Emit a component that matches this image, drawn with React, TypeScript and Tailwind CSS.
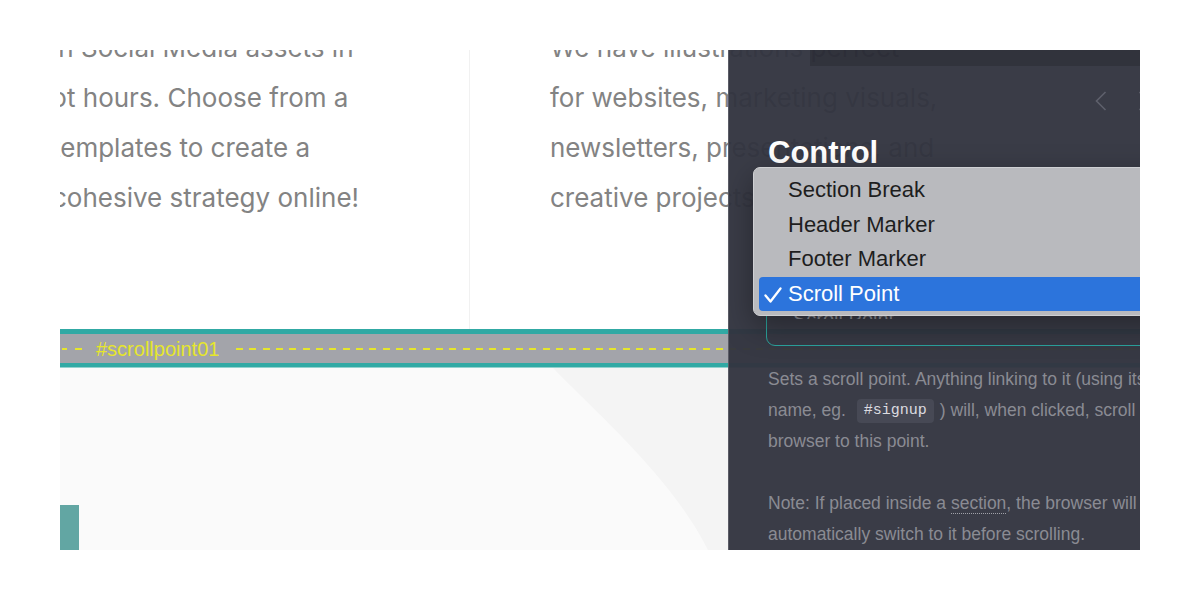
import React from "react";

function Chevron({ dir }: { dir: "left" | "right" }) {
  return (
    <svg width="12" height="20" viewBox="0 0 12 20" fill="none">
      {dir === "left" ? (
        <path d="M10.5 1 L1.5 10 L10.5 19" stroke="#5e606c" strokeWidth="1.6" />
      ) : (
        <path d="M1.5 1 L10.5 10 L1.5 19" stroke="#5e606c" strokeWidth="1.6" />
      )}
    </svg>
  );
}

function Check() {
  return (
    <svg width="18" height="16" viewBox="0 0 18 16" fill="none">
      <path d="M1.5 8.5 L6.5 14.5 L16.5 1.5" stroke="white" strokeWidth="2.3" strokeLinecap="round" strokeLinejoin="round" />
    </svg>
  );
}

export default function App() {
  const items = ["Section Break", "Header Marker", "Footer Marker"];
  return (
    <div className="w-[1200px] h-[600px] bg-white pt-[50px] pl-[60px] font-['Inter',sans-serif]">
      <div className="relative w-[1080px] h-[500px] overflow-hidden bg-white flex flex-col">
        {/* website columns */}
        <div className="flex h-[279px] shrink-0 text-[26px] leading-[50px] text-[#838383] whitespace-nowrap">
          <div className="w-[410px] shrink-0 border-r border-[#f1f1f1]">
            <div className="-mt-[27px] -ml-[8px]">
              <div>in Social Media assets in</div>
              <div className="-ml-[16px]">not hours. Choose from a</div>
              <div>templates to create a</div>
              <div>cohesive strategy online!</div>
            </div>
          </div>
          <div className="pl-[80px]">
            <div className="-mt-[27px]">
              <div>We have illustrations perfect</div>
              <div>for websites, marketing visuals,</div>
              <div>newsletters, presentations, and</div>
              <div>creative projects.</div>
            </div>
          </div>
        </div>

        {/* lower section */}
        <div className="relative flex-1 bg-[#fafafa]">
          <svg className="absolute inset-0" width="1080" height="221" viewBox="0 0 1080 221">
            <path d="M455 0 L492 38 C 545 92, 612 150, 648 221 L 1080 221 L 1080 0 Z" fill="#f4f4f4" />
          </svg>
          <div className="relative h-[38px] border-t-[5px] border-b-[4px] border-[#31a9a4] bg-[#a3a4aa] shadow-[0_1px_0_#93d1cd] flex items-center">
            <div className="flex items-center w-[36px] shrink-0">
              <span className="ml-[2px] w-[5px] h-[2px] bg-[#e6e62c]" />
              <span className="ml-[8px] w-[7px] h-[2px] bg-[#e6e62c]" />
            </div>
            <span className="font-['Liberation_Sans',Arial,sans-serif] text-[20px] leading-none text-[#e6e62c]">#scrollpoint01</span>
            <div className="ml-[17px] flex-1 h-[2px] mt-[1px] bg-[repeating-linear-gradient(90deg,#e6e62c_0px,#e6e62c_7px,transparent_7px,transparent_13.33px)]" />
          </div>
          <div className="relative mt-[138px] w-[19px] h-[45px] bg-[#62a6a3]" />
        </div>

        {/* inspector panel */}
        <div className="absolute left-[668px] top-0 w-[480px] h-[500px] bg-[rgba(50,52,64,0.96)] border-l border-[#5b5c66] font-['Liberation_Sans',Arial,sans-serif]">
          <div className="ml-[81px] h-[16px] bg-black/15" />
          <div className="flex gap-[31px] pl-[366px] mt-[25px] h-[20px]">
            <Chevron dir="left" />
            <Chevron dir="right" />
          </div>
          <div className="pl-[39px] mt-[24px] text-[31px] leading-[36px] font-bold text-white">Control</div>

          <div className="relative ml-[37px] mt-[105px] w-[450px] h-[70px] border-[1.5px] border-[#2ba39c] rounded-[9px]">
            <div className="absolute left-[26px] top-[35px] h-[7px] overflow-hidden">
              <div className="-mt-[3px] text-[20px] leading-none text-[#8e8f96] whitespace-nowrap">Scroll Point</div>
            </div>
          </div>

          <div className="pl-[39px] mt-[18px] text-[17.5px] leading-[31px] text-[#8a8b93] whitespace-nowrap">
            <div>Sets a scroll point. Anything linking to it (using its</div>
            <div className="flex items-center">
              <span>name, eg.</span>
              <span className="ml-[11px] mr-[6px] h-[24px] px-[7px] flex items-center rounded-[4px] bg-[#474955] text-[#dcdce0] font-['Liberation_Mono',monospace] text-[15px]">#signup</span>
              <span>) will, when clicked, scroll the</span>
            </div>
            <div>browser to this point.</div>
            <div className="h-[31px]" />
            <div>
              Note: If placed inside a{" "}
              <span className="border-b border-dotted border-[#a0a1a8] leading-none">section</span>, the browser will
            </div>
            <div>automatically switch to it before scrolling.</div>
          </div>

          {/* native popup menu */}
          <div className="absolute left-[24px] top-[117px] w-[470px] h-[149px] rounded-[7px] bg-[#b9babe] border border-[#cfd0d3] shadow-[0_10px_30px_rgba(0,0,0,0.35)] pt-[5px] text-[22px] text-[#1e1e1e]">
            {items.map((t) => (
              <div key={t} className="mx-[5px] h-[34.5px] pl-[29px] flex items-center leading-none">
                {t}
              </div>
            ))}
            <div className="relative mx-[5px] h-[34.5px] pl-[29px] flex items-center leading-none rounded-[4px] bg-[#2c74dc] text-white">
              <span className="absolute left-[5px] top-[10px]">
                <Check />
              </span>
              Scroll Point
            </div>
          </div>
        </div>
      </div>
    </div>
  );
}
